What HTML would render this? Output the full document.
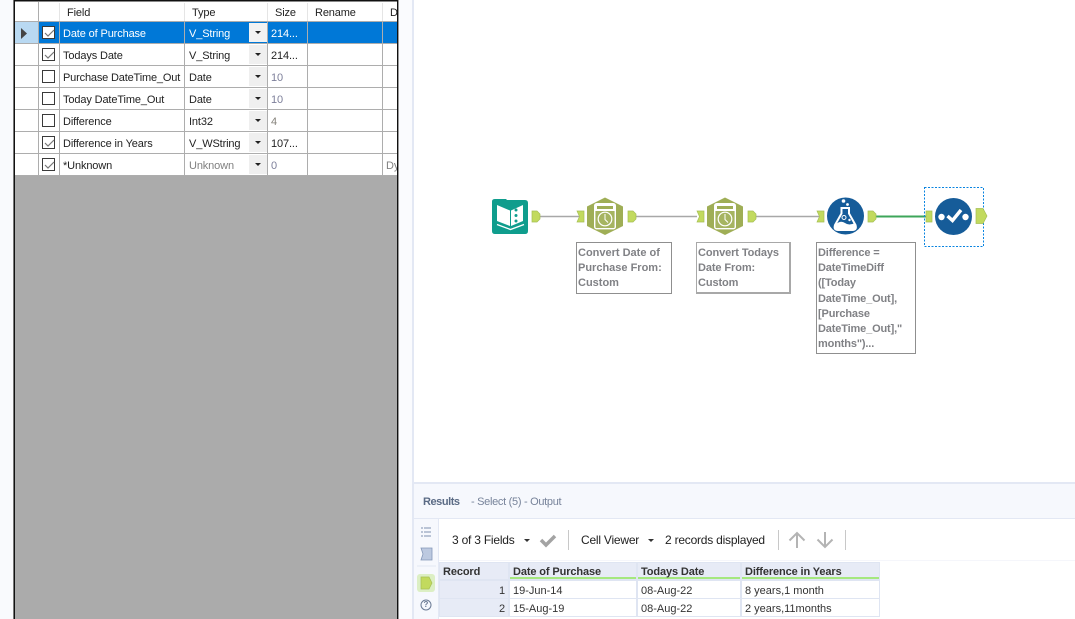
<!DOCTYPE html>
<html><head><meta charset="utf-8"><style>
*{box-sizing:border-box}
html,body{margin:0;padding:0}
body{width:1075px;height:619px;overflow:hidden;position:relative;background:#fff;font-family:"Liberation Sans",sans-serif;color:#222}
.a{position:absolute}
.t{position:absolute;white-space:nowrap;font-size:11px;line-height:14px;letter-spacing:-.13px}
.h{background:#adadad}
.b{color:#7d7f9a}
.n{position:absolute;background:#fff;border:1px solid #8f8f8f;font:bold 11px/15.2px "Liberation Sans",sans-serif;color:#808185;padding:3px 0 0 1px;white-space:nowrap}
.c{position:absolute;left:42px;width:13px;height:13px;border:1px solid #3a3a3a;background:#fff}
.dd{position:absolute;left:249px;width:18px;height:19px;background:#efefef}
.dd:after{content:"";position:absolute;left:6px;top:8px;border:3px solid transparent;border-top:3px solid #222;border-bottom:0}
.ck{position:absolute;left:1px;top:1px}
.r{position:absolute;font-size:11px;line-height:14px;white-space:nowrap}
.m{font-size:12px;letter-spacing:-.22px}
.tb{font-weight:bold;color:#333;letter-spacing:-.12px}
</style></head><body>
<div class="a" style="left:0;top:0;width:13px;height:619px;background:#f9fafd"></div>
<div class="a" style="left:13px;top:0;width:1px;height:619px;background:#777"></div>
<div class="a" style="left:14px;top:0;width:1px;height:619px;background:#111"></div>
<div class="a" style="left:15px;top:0;width:382px;height:1px;background:#111"></div>
<div class="a" style="left:15px;top:1px;width:382px;height:1px;background:#888"></div>
<div class="a" style="left:397px;top:0;width:1px;height:619px;background:#111"></div>
<div class="a" style="left:398px;top:0;width:1px;height:619px;background:#999"></div>
<div class="a" style="left:399px;top:0;width:13px;height:619px;background:#fafbfe"></div>
<div class="a" style="left:412px;top:0;width:2px;height:619px;background:#e3e8f4"></div>
<div class="a" style="left:15px;top:176px;width:382px;height:443px;background:#ababab"></div>

<!-- selected row -->
<div class="a" style="left:15px;top:22px;width:23px;height:21px;background:#b9d9f2"></div>
<div class="a" style="left:39px;top:22px;width:358px;height:21px;background:#0078d7"></div>
<svg class="a" style="left:20px;top:28px" width="8" height="11"><path d="M1 0L7 5.5L1 11Z" fill="#444"/></svg>

<!-- grid -->
<div class="a h" style="left:15px;top:21px;width:382px;height:1px"></div>
<div class="a h" style="left:15px;top:43px;width:382px;height:1px"></div>
<div class="a h" style="left:15px;top:65px;width:382px;height:1px"></div>
<div class="a h" style="left:15px;top:87px;width:382px;height:1px"></div>
<div class="a h" style="left:15px;top:109px;width:382px;height:1px"></div>
<div class="a h" style="left:15px;top:131px;width:382px;height:1px"></div>
<div class="a h" style="left:15px;top:153px;width:382px;height:1px"></div>
<div class="a h" style="left:15px;top:175px;width:382px;height:1px"></div>
<div class="a h" style="left:38px;top:2px;width:1px;height:174px"></div>
<div class="a h" style="left:59px;top:22px;width:1px;height:154px"></div>
<div class="a h" style="left:184px;top:22px;width:1px;height:154px"></div>
<div class="a h" style="left:267px;top:22px;width:1px;height:154px"></div>
<div class="a h" style="left:307px;top:22px;width:1px;height:154px"></div>
<div class="a h" style="left:382px;top:22px;width:1px;height:154px"></div>
<div class="a" style="left:59px;top:3px;width:1px;height:18px;background:#e5e5e5"></div>
<div class="a" style="left:184px;top:3px;width:1px;height:18px;background:#e5e5e5"></div>
<div class="a" style="left:267px;top:3px;width:1px;height:18px;background:#e5e5e5"></div>
<div class="a" style="left:307px;top:3px;width:1px;height:18px;background:#e5e5e5"></div>
<div class="a" style="left:382px;top:3px;width:1px;height:18px;background:#e5e5e5"></div>

<!-- header -->
<div class="t" style="left:67px;top:6px">Field</div>
<div class="t" style="left:192px;top:6px">Type</div>
<div class="t" style="left:275px;top:6px">Size</div>
<div class="t" style="left:315px;top:6px">Rename</div>
<div class="t" style="left:390px;top:6px;width:7px;overflow:hidden">De</div>

<!-- checkboxes -->
<div class="c" style="top:26px"><svg class="ck" width="11" height="11"><path d="M1 5L4 8L10 2" fill="none" stroke="#777" stroke-width="1.2"/></svg></div>
<div class="c" style="top:48px"><svg class="ck" width="11" height="11"><path d="M1 5L4 8L10 2" fill="none" stroke="#777" stroke-width="1.2"/></svg></div>
<div class="c" style="top:70px"></div>
<div class="c" style="top:92px"></div>
<div class="c" style="top:114px"></div>
<div class="c" style="top:136px"><svg class="ck" width="11" height="11"><path d="M1 5L4 8L10 2" fill="none" stroke="#777" stroke-width="1.2"/></svg></div>
<div class="c" style="top:158px"><svg class="ck" width="11" height="11"><path d="M1 5L4 8L10 2" fill="none" stroke="#777" stroke-width="1.2"/></svg></div>

<!-- dropdowns -->
<div class="dd" style="top:23px;background:#f2f2f2"></div>
<div class="dd" style="top:45px"></div>
<div class="dd" style="top:67px"></div>
<div class="dd" style="top:89px"></div>
<div class="dd" style="top:111px"></div>
<div class="dd" style="top:133px"></div>
<div class="dd" style="top:155px"></div>

<!-- rows -->
<div class="t" style="left:63px;top:27px;color:#fff">Date of Purchase</div>
<div class="t" style="left:189px;top:27px;color:#fff">V_String</div>
<div class="t" style="left:271px;top:27px;color:#fff">214...</div>
<div class="t" style="left:63px;top:49px">Todays Date</div>
<div class="t" style="left:189px;top:49px">V_String</div>
<div class="t" style="left:271px;top:49px">214...</div>
<div class="t" style="left:63px;top:71px;letter-spacing:-.17px">Purchase DateTime_Out</div>
<div class="t" style="left:189px;top:71px">Date</div>
<div class="t b" style="left:271px;top:71px">10</div>
<div class="t" style="left:63px;top:93px">Today DateTime_Out</div>
<div class="t" style="left:189px;top:93px">Date</div>
<div class="t b" style="left:271px;top:93px">10</div>
<div class="t" style="left:63px;top:115px">Difference</div>
<div class="t" style="left:189px;top:115px">Int32</div>
<div class="t" style="left:271px;top:115px;color:#85827a">4</div>
<div class="t" style="left:63px;top:137px">Difference in Years</div>
<div class="t" style="left:189px;top:137px">V_WString</div>
<div class="t" style="left:271px;top:137px">107...</div>
<div class="t" style="left:63px;top:159px">*Unknown</div>
<div class="t" style="left:189px;top:159px;color:#808080">Unknown</div>
<div class="t b" style="left:271px;top:159px">0</div>
<div class="t" style="left:386px;top:159px;color:#808080;width:11px;overflow:hidden">Dy</div>

<!-- workflow canvas -->
<svg class="a" style="left:414px;top:180px" width="661" height="70" viewBox="414 180 661 70">
 <!-- connectors -->
 <path d="M539 216.500H579" stroke="#a8a8a8" stroke-width="1.500" fill="none"/>
 <path d="M635 216.500H697" stroke="#a8a8a8" stroke-width="1.500" fill="none"/>
 <path d="M755 216.500H819" stroke="#a8a8a8" stroke-width="1.500" fill="none"/>
 <path d="M875 216.500H926" stroke="#3da65a" stroke-width="2" fill="none"/>
 <!-- input tool -->
 <path d="M492 201.500Q492 199 495 199H506L507 200H525Q528 200 528 203V231Q528 234 525 234H495Q492 234 492 231Z" fill="#0f9d8d"/>
 <path d="M497 205L510 210.500V226L497 221Z" fill="#fff"/>
 <path d="M511 210.500L523 205V221L511 226Z" fill="#fff"/>
 <path d="M497 224.500L510.500 229.500L524 224.500" fill="none" stroke="#fff" stroke-width="1.300"/>
 <circle cx="516" cy="210" r="1.500" fill="#0f9d8d"/><circle cx="516" cy="215.500" r="1.500" fill="#0f9d8d"/><circle cx="516" cy="221" r="1.500" fill="#0f9d8d"/>
 <!-- datetime tools -->
 <g>
  <path d="M605 197.500L623 206.500V226L605 235L587 226V206.500Z" fill="#9fae56"/>
  <rect x="594.700" y="203.700" width="20.600" height="25" rx="2" fill="#a6b461" stroke="#fff" stroke-width="1.400"/>
  <rect x="595" y="204" width="20" height="7" fill="#fff"/>
  <rect x="597" y="206" width="16" height="3" fill="#9fae56"/>
  <circle cx="605" cy="219" r="6.800" fill="none" stroke="#fff" stroke-width="1.200"/>
  <path d="M605 214V219.500L608 222.500" fill="none" stroke="#fff" stroke-width="1"/>
 </g>
 <g transform="translate(120 0)">
  <path d="M605 197.500L623 206.500V226L605 235L587 226V206.500Z" fill="#9fae56"/>
  <rect x="594.700" y="203.700" width="20.600" height="25" rx="2" fill="#a6b461" stroke="#fff" stroke-width="1.400"/>
  <rect x="595" y="204" width="20" height="7" fill="#fff"/>
  <rect x="597" y="206" width="16" height="3" fill="#9fae56"/>
  <circle cx="605" cy="219" r="6.800" fill="none" stroke="#fff" stroke-width="1.200"/>
  <path d="M605 214V219.500L608 222.500" fill="none" stroke="#fff" stroke-width="1"/>
 </g>
 <!-- formula -->
 <circle cx="845.500" cy="216" r="18.500" fill="#165c99"/>
 <path d="M841.500 208H849V213.500L855.500 225Q857 230 852.500 230H838Q833.500 230 835 225L841.500 213.500Z" fill="#165c99" stroke="#fff" stroke-width="2"/>
 <path d="M836 224Q841 220 845 223T855 223L856 227Q857 230 852.500 230H838Q833 230 835 226Z" fill="#fff"/>
 <circle cx="844" cy="217.500" r="2" fill="none" stroke="#fff" stroke-width="1"/><circle cx="849.500" cy="220" r="1.200" fill="#fff"/>
 <circle cx="843.500" cy="201" r="1.800" fill="#fff"/><circle cx="847.500" cy="204.500" r="1.400" fill="#fff"/>
 <!-- select -->
 <circle cx="953.500" cy="216.500" r="18.500" fill="#165c99"/>
 <circle cx="941.500" cy="217" r="3.200" fill="#fff"/><circle cx="965.500" cy="217" r="3.200" fill="#fff"/>
 <path d="M947.500 216L952.500 220.500L961 210" fill="none" stroke="#fff" stroke-width="3.400"/>
 <rect x="924.500" y="187.500" width="59" height="59" fill="none" stroke="#0a84e0" stroke-width="1" stroke-dasharray="2 1.500"/>
 <!-- anchors -->
 <path d="M532 211H537L540 214V219L537 222H532Z" fill="#c2da5e" stroke="#a5bf55" stroke-width=".7"/>
 <path d="M577 211H584V222H577L579.500 216.500Z" fill="#c2da5e" stroke="#a5bf55" stroke-width=".7"/>
 <path d="M628 211H633L636 214V219L633 222H628Z" fill="#c2da5e" stroke="#a5bf55" stroke-width=".7"/>
 <path d="M697 211H704V222H697L699.500 216.500Z" fill="#c2da5e" stroke="#a5bf55" stroke-width=".7"/>
 <path d="M748 211H753L756 214V219L753 222H748Z" fill="#c2da5e" stroke="#a5bf55" stroke-width=".7"/>
 <path d="M817 211H824V222H817L819.500 216.500Z" fill="#c2da5e" stroke="#a5bf55" stroke-width=".7"/>
 <path d="M868 211H873L876 214V219L873 222H868Z" fill="#c2da5e" stroke="#a5bf55" stroke-width=".7"/>
 <path d="M926 211H932V222H926Z" fill="#c2da5e" stroke="#a5bf55" stroke-width=".7"/>
 <path d="M976 208.500H983L987 216L983 223.500H976Z" fill="#c2da5e" stroke="#a5bf55" stroke-width=".7"/>
</svg>

<div class="n" style="left:576px;top:242px;width:96px;height:52px">Convert Date of<br>Purchase From:<br>Custom</div>
<div class="n" style="left:696px;top:242px;width:95px;height:52px;border-color:#a8a8a8;border-right-width:2px;border-bottom-width:2px;letter-spacing:-.1px">Convert Todays<br>Date From:<br>Custom</div>
<div class="n" style="left:816px;top:242px;width:100px;height:112px;letter-spacing:-.15px">Difference =<br>DateTimeDiff<br>([Today<br>DateTime_Out],<br>[Purchase<br>DateTime_Out],"<br>months")...</div>

<!-- results -->
<div class="a" style="left:414px;top:482px;width:661px;height:2px;background:#e3e8f4"></div>
<div class="a" style="left:414px;top:484px;width:661px;height:135px;background:#f6f8fd"></div>
<div class="r" style="left:423px;top:495px;color:#5b6b85;letter-spacing:-.45px"><b>Results</b></div>
<div class="r" style="left:471px;top:495px;color:#77839a;letter-spacing:-.3px">- Select (5) - Output</div>
<div class="a" style="left:414px;top:518px;width:661px;height:1px;background:#e3e8f4"></div>
<div class="a" style="left:438px;top:519px;width:637px;height:100px;background:#fff"></div>
<div class="a" style="left:438px;top:519px;width:1px;height:100px;background:#e3e8f4"></div>
<div class="a" style="left:439px;top:560px;width:636px;height:1px;background:#f5f6fb"></div>

<svg class="a" style="left:414px;top:519px" width="24" height="100">
 <path d="M10 9H17M10 13H17M10 17H17" stroke="#7d8fae" stroke-width="1"/>
 <path d="M7 9H9M7 13H9M7 17H9" stroke="#7d8fae" stroke-width="1"/>
 <path d="M7 29H18V41H7L9 35Z" fill="#bcc9e0" stroke="#8497b8" stroke-width=".8"/>
 <path d="M3 47H22" stroke="#e3e8f4"/>
 <rect x="3" y="55" width="18" height="18" rx="3" fill="#dcefc4"/>
 <path d="M7 58H15L18 64L15 70H7Z" fill="#c2da5e" stroke="#a5bf55" stroke-width=".7"/>
 <circle cx="12" cy="86" r="5" fill="none" stroke="#6a7a94" stroke-width="1"/>
</svg>
<div class="a" style="left:423px;top:600px;width:6px;font-size:8px;line-height:10px;color:#6a7a94;text-align:center;font-weight:bold">?</div>

<div class="r m" style="left:452px;top:533px">3 of 3 Fields</div>
<div class="a" style="left:524px;top:539px;border:3px solid transparent;border-top:3px solid #333;border-bottom:0"></div>
<svg class="a" style="left:539px;top:533px" width="18" height="15"><path d="M2 7L7 12L16 3" fill="none" stroke="#a3a3a3" stroke-width="3.500"/></svg>
<div class="a" style="left:568px;top:530px;width:1px;height:20px;background:#c8c8c8"></div>
<div class="r m" style="left:581px;top:533px">Cell Viewer</div>
<div class="a" style="left:648px;top:539px;border:3px solid transparent;border-top:3px solid #333;border-bottom:0"></div>
<div class="r m" style="left:665px;top:533px">2 records displayed</div>
<div class="a" style="left:778px;top:530px;width:1px;height:20px;background:#c8c8c8"></div>
<svg class="a" style="left:787px;top:531px" width="48" height="18"><path d="M10 17V2M2.500 9.500L10 2L17.500 9.500" fill="none" stroke="#b4b4b4" stroke-width="2"/><path d="M38 1V16M30.500 8.500L38 16L45.500 8.500" fill="none" stroke="#b4b4b4" stroke-width="2"/></svg>
<div class="a" style="left:845px;top:530px;width:1px;height:20px;background:#c8c8c8"></div>

<!-- results table -->
<div class="a" style="left:439px;top:562px;width:441px;height:55px;background:#dfe5f2"></div>
<div class="a" style="left:440px;top:563px;width:68px;height:16px;background:#e7ebf6"></div>
<div class="a" style="left:510px;top:563px;width:126px;height:16px;background:#e7ebf6"></div>
<div class="a" style="left:638px;top:563px;width:102px;height:16px;background:#e7ebf6"></div>
<div class="a" style="left:742px;top:563px;width:137px;height:16px;background:#e7ebf6"></div>
<div class="a" style="left:510px;top:577px;width:126px;height:2px;background:#a5e87e"></div>
<div class="a" style="left:638px;top:577px;width:102px;height:2px;background:#a5e87e"></div>
<div class="a" style="left:742px;top:577px;width:137px;height:2px;background:#a5e87e"></div>
<div class="a" style="left:440px;top:581px;width:68px;height:17px;background:#e7ebf6"></div>
<div class="a" style="left:440px;top:599px;width:68px;height:17px;background:#e7ebf6"></div>
<div class="a" style="left:510px;top:581px;width:126px;height:17px;background:#fff"></div>
<div class="a" style="left:638px;top:581px;width:102px;height:17px;background:#fff"></div>
<div class="a" style="left:742px;top:581px;width:137px;height:17px;background:#fff"></div>
<div class="a" style="left:510px;top:599px;width:126px;height:17px;background:#fff"></div>
<div class="a" style="left:638px;top:599px;width:102px;height:17px;background:#fff"></div>
<div class="a" style="left:742px;top:599px;width:137px;height:17px;background:#fff"></div>
<div class="r tb" style="left:443px;top:565px">Record</div>
<div class="r tb" style="left:513px;top:565px">Date of Purchase</div>
<div class="r tb" style="left:641px;top:565px">Todays Date</div>
<div class="r tb" style="left:745px;top:565px">Difference in Years</div>
<div class="r" style="left:499px;top:584px;color:#333">1</div>
<div class="r" style="left:513px;top:584px;color:#333">19-Jun-14</div>
<div class="r" style="left:641px;top:584px;color:#333">08-Aug-22</div>
<div class="r" style="left:745px;top:584px;color:#333">8 years,1 month</div>
<div class="r" style="left:499px;top:602px;color:#333">2</div>
<div class="r" style="left:513px;top:602px;color:#333">15-Aug-19</div>
<div class="r" style="left:641px;top:602px;color:#333">08-Aug-22</div>
<div class="r" style="left:745px;top:602px;color:#333">2 years,11months</div>
</body></html>
